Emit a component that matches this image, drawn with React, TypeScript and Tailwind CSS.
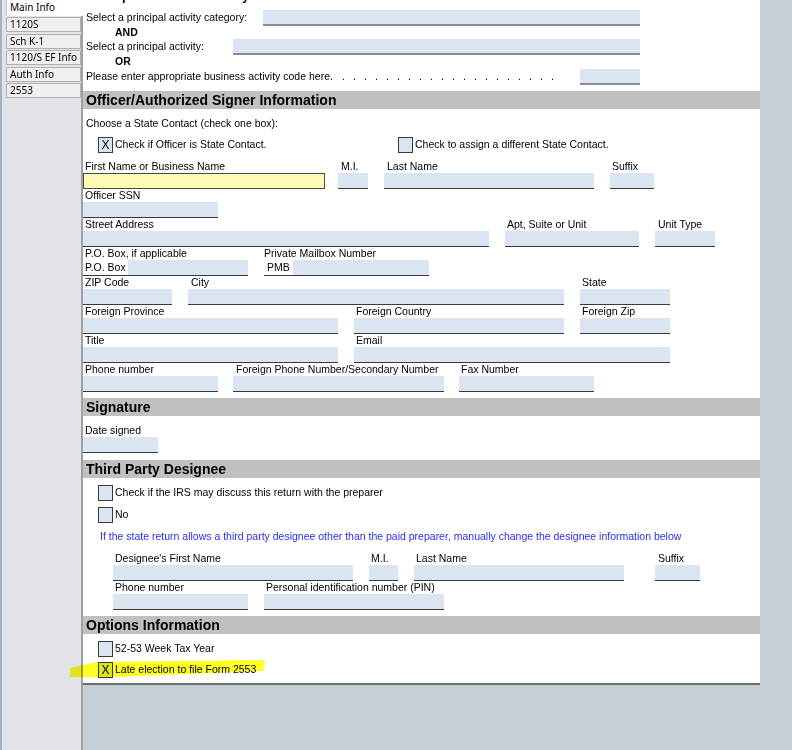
import React from "react";

const TABS = ["1120S", "Sch K-1", "1120/S EF Info", "Auth Info", "2553"];

function Lbl({ text, c = "pl-[2px]" }: { text: string; c?: string }) {
  return <div className={`h-[13px] leading-[13px] whitespace-nowrap ${c}`}>{text}</div>;
}

function Box({ c = "" }: { c?: string }) {
  return <div className={`h-[16px] bg-[#dbe5f1] border-b border-[#3a3a3a] ${c}`} />;
}

function Col({ c, label, lc, yellow }: { c: string; label: string; lc?: string; yellow?: boolean }) {
  return (
    <div className={c}>
      <Lbl text={label} c={lc} />
      {yellow ? <div className="h-[16px] bg-[#fdfab4] border border-[#4a4a4a]" /> : <Box />}
    </div>
  );
}

function Check({ checked }: { checked?: boolean }) {
  return (
    <div className="w-[15px] h-[16px] shrink-0 bg-[#dbe5f1] border border-[#3a3a3a] flex items-center justify-center text-[12px] leading-none">
      {checked ? "X" : ""}
    </div>
  );
}

function CheckRow({ c, label, checked }: { c: string; label: string; checked?: boolean }) {
  return (
    <div className={`flex items-center h-[16px] pl-[15px] ${c}`}>
      <Check checked={checked} />
      <span className="ml-[2px] whitespace-nowrap">{label}</span>
    </div>
  );
}

function Bar({ title, c }: { title: string; c: string }) {
  return (
    <div className={`h-[18px] bg-[#c0c0c0] pl-[3px] text-[14px] font-bold leading-[18px] ${c}`}>{title}</div>
  );
}

export default function App() {
  return (
    <div className="relative w-[792px] h-[750px] overflow-hidden flex items-start bg-[#c4d0d6] font-['Liberation_Sans',Arial,sans-serif] text-black">
      {/* side tabs */}
      <div className="w-[81px] h-[750px] shrink-0 bg-[#e0e3e7] border-l-2 border-[#a5b2be] font-['Noto_Sans','DejaVu_Sans',sans-serif] text-[10px]">
        <div className="relative z-10 ml-[4px] w-[77px] h-[16px] bg-white border-l border-[#c4c4c4] pl-[3px] leading-[15px]">
          Main Info
        </div>
        <div className="mt-[1px] flex flex-col gap-[1.5px]">
          {TABS.map(t => (
            <div
              key={t}
              className="ml-[4px] w-[75px] h-[15px] bg-[#efefef] border border-[#b0b0b0] rounded-tl-[2px] pl-[3px] leading-[13px] whitespace-nowrap overflow-hidden"
            >
              {t}
            </div>
          ))}
        </div>
      </div>
      <div className="w-[2px] h-[750px] shrink-0 bg-[#a0a0a0]" />

      {/* form */}
      <div className="w-[677px] shrink-0 bg-white border-b-2 border-[#6e6e6e] pb-[5px] text-[10.5px]">
        <div className="-mt-[11px] h-[14px] pl-[3px] text-[13px] font-bold leading-[14px]">Principal business activity</div>

        <div className="mt-[7px] flex items-center h-[16px]">
          <div className="w-[180px] pl-[3px] whitespace-nowrap">Select a principal activity category:</div>
          <div className="w-[377px] h-[16px] bg-[#dbe5f1] border-b-2 border-[#8c8c8c]" />
        </div>
        <div className="h-[13px] leading-[13px] pl-[32px] font-bold">AND</div>
        <div className="flex items-center h-[16px]">
          <div className="w-[150px] pl-[3px] whitespace-nowrap">Select a principal activity:</div>
          <div className="w-[407px] h-[16px] bg-[#dbe5f1] border-b-2 border-[#8c8c8c]" />
        </div>
        <div className="h-[13px] leading-[13px] pl-[32px] font-bold">OR</div>
        <div className="mt-[1px] flex items-center h-[16px]">
          <div className="w-[497px] pl-[3px] flex items-center whitespace-nowrap">
            <span>Please enter appropriate business activity code here.</span>
            <div className="ml-[9px] flex">
              {Array.from({ length: 20 }).map((_, i) => (
                <span key={i} className="w-[11px]">.</span>
              ))}
            </div>
          </div>
          <div className="w-[60px] h-[16px] bg-[#dbe5f1] border-b-2 border-[#8c8c8c]" />
        </div>

        <Bar c="mt-[6px]" title="Officer/Authorized Signer Information" />
        <div className="mt-[8px] h-[13px] leading-[13px] pl-[3px]">Choose a State Contact (check one box):</div>
        <div className="mt-[7px] flex">
          <CheckRow c="w-[300px]" label="Check if Officer is State Contact." checked />
          <CheckRow c="" label="Check to assign a different State Contact." />
        </div>

        <div className="mt-[7px] flex">
          <Col c="w-[242px]" label="First Name or Business Name" yellow />
          <Col c="ml-[13px] w-[30px]" lc="pl-[3px]" label="M.I." />
          <Col c="ml-[16px] w-[210px]" lc="pl-[3px]" label="Last Name" />
          <Col c="ml-[16px] w-[44px]" lc="pl-[2px]" label="Suffix" />
        </div>
        <div className="flex">
          <Col c="w-[135px]" label="Officer SSN" />
        </div>
        <div className="flex">
          <Col c="w-[406px]" label="Street Address" />
          <Col c="ml-[16px] w-[134px]" label="Apt, Suite or Unit" />
          <Col c="ml-[16px] w-[60px]" lc="pl-[3px]" label="Unit Type" />
        </div>
        <div className="flex">
          <div className="w-[181px]"><Lbl text="P.O. Box, if applicable" c="pl-[2px] h-[12px] leading-[12px]" /></div>
          <Lbl text="Private Mailbox Number" c="h-[12px] leading-[12px]" />
        </div>
        <div className="flex">
          <div className="w-[165px] h-[16px] flex border-b border-[#3a3a3a]">
            <span className="w-[45px] pl-[2px] leading-[15px]">P.O. Box</span>
            <div className="flex-1 bg-[#dbe5f1]" />
          </div>
          <div className="ml-[16px] w-[165px] h-[16px] flex border-b border-[#3a3a3a]">
            <span className="w-[29px] pl-[3px] leading-[15px]">PMB</span>
            <div className="flex-1 bg-[#dbe5f1]" />
          </div>
        </div>
        <div className="flex">
          <Col c="w-[89px]" label="ZIP Code" />
          <Col c="ml-[16px] w-[376px]" lc="pl-[3px]" label="City" />
          <Col c="ml-[16px] w-[90px]" label="State" />
        </div>
        <div className="flex">
          <Col c="w-[255px]" label="Foreign Province" />
          <Col c="ml-[16px] w-[210px]" label="Foreign Country" />
          <Col c="ml-[16px] w-[90px]" label="Foreign Zip" />
        </div>
        <div className="flex">
          <Col c="w-[255px]" label="Title" />
          <Col c="ml-[16px] w-[316px]" label="Email" />
        </div>
        <div className="flex">
          <Col c="w-[135px]" label="Phone number" />
          <Col c="ml-[15px] w-[211px]" lc="pl-[3px]" label="Foreign Phone Number/Secondary Number" />
          <Col c="ml-[15px] w-[135px]" label="Fax Number" />
        </div>

        <Bar c="mt-[6px]" title="Signature" />
        <div className="mt-[8px] flex">
          <Col c="w-[75px]" label="Date signed" />
        </div>

        <Bar c="mt-[7px]" title="Third Party Designee" />
        <CheckRow c="mt-[7px]" label="Check if the IRS may discuss this return with the preparer" />
        <CheckRow c="mt-[6px]" label="No" />
        <div className="mt-[7px] h-[13px] leading-[13px] pl-[17px] text-[#2c2cf0] whitespace-nowrap">
          If the state return allows a third party designee other than the paid preparer, manually change the designee information below
        </div>
        <div className="mt-[9px] flex">
          <Col c="ml-[30px] w-[240px]" label="Designee's First Name" />
          <Col c="ml-[16px] w-[29px]" label="M.I." />
          <Col c="ml-[16px] w-[210px]" label="Last Name" />
          <Col c="ml-[31px] w-[45px]" lc="pl-[3px]" label="Suffix" />
        </div>
        <div className="flex">
          <Col c="ml-[30px] w-[135px]" label="Phone number" />
          <Col c="ml-[16px] w-[180px]" label="Personal identification number (PIN)" />
        </div>

        <Bar c="mt-[6px]" title="Options Information" />
        <CheckRow c="mt-[7px]" label="52-53 Week Tax Year" />
        <CheckRow c="mt-[5px]" label="Late election to file Form 2553" checked />
      </div>

      {/* highlighter stroke */}
      <svg className="absolute left-0 top-0 pointer-events-none mix-blend-multiply" width="792" height="750">
        <polygon points="70,668 96,662 265,660 263,671 112,677 70,677" fill="#ffff00" fillOpacity="0.85" />
      </svg>
    </div>
  );
}
